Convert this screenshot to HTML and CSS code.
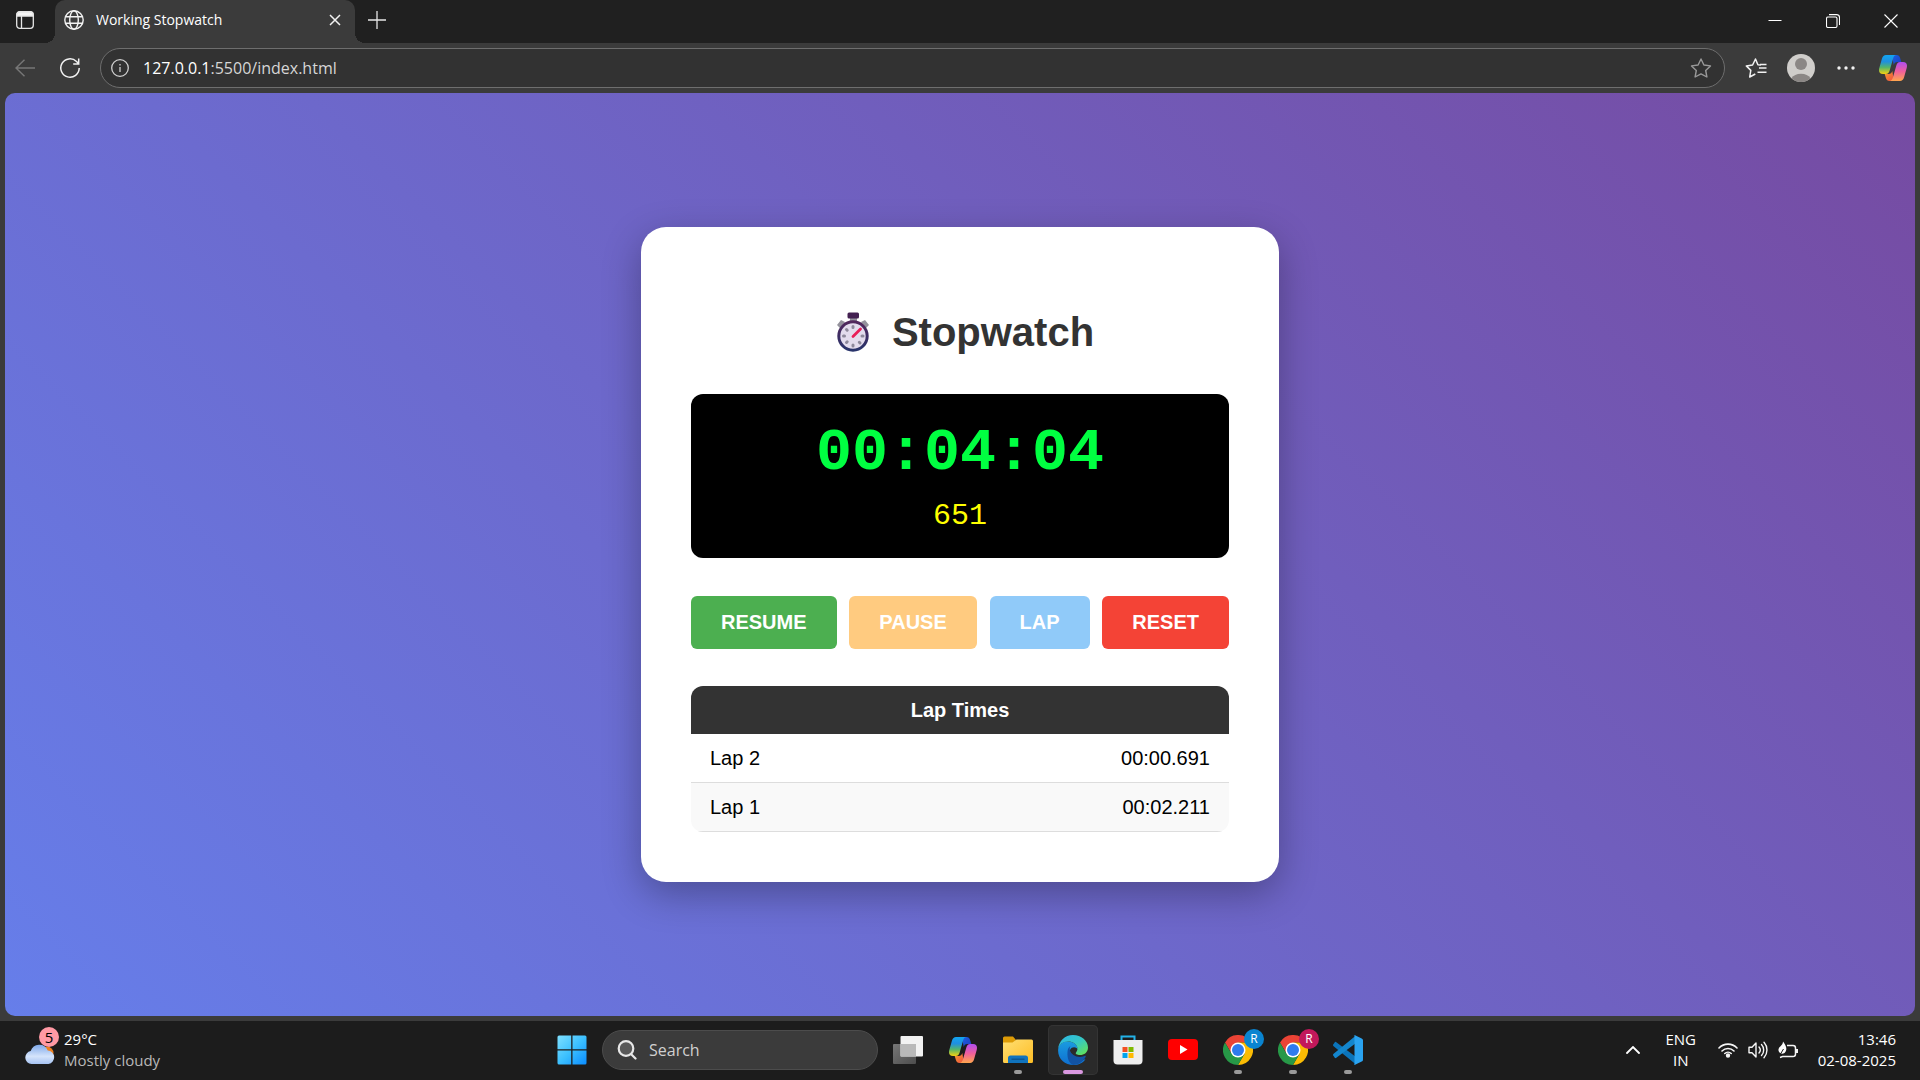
FILE: index.html
```html
<!DOCTYPE html>
<html lang="en">
<head>
<meta charset="utf-8">
<title>Working Stopwatch</title>
<link rel="stylesheet" href="styles.css">
</head>
<body>
<svg class="defs" aria-hidden="true">
  <defs>
    <linearGradient id="cpA" x1="0" y1="0" x2="0" y2="1"><stop offset="0" stop-color="#12a5f0"/><stop offset=".35" stop-color="#1f8fe0"/><stop offset=".65" stop-color="#53b56b"/><stop offset="1" stop-color="#f5d310"/></linearGradient>
    <linearGradient id="cpB" x1="0" y1="0" x2="0" y2="1"><stop offset="0" stop-color="#b04df0"/><stop offset=".5" stop-color="#f05f9c"/><stop offset="1" stop-color="#ffa64d"/></linearGradient>
    <linearGradient id="cpC" x1="0" y1="0" x2="1" y2="1"><stop offset="0" stop-color="#1d5fe0"/><stop offset="1" stop-color="#1b3fc0"/></linearGradient>
    <linearGradient id="cpD" x1="0" y1="0" x2="1" y2="1"><stop offset="0" stop-color="#f7a330"/><stop offset="1" stop-color="#ee4a3f"/></linearGradient>
    <linearGradient id="win" x1="0" y1="0" x2="1" y2="1"><stop offset="0" stop-color="#7fe0ff"/><stop offset=".5" stop-color="#3cc0ff"/><stop offset="1" stop-color="#0a8cff"/></linearGradient>
    <linearGradient id="fold" x1="0" y1="0" x2="1" y2="1"><stop offset="0" stop-color="#ffdf73"/><stop offset="1" stop-color="#fdbd25"/></linearGradient>
    <linearGradient id="edTop" x1="0" y1="0" x2="1" y2="1"><stop offset="0" stop-color="#2cb5e8"/><stop offset=".5" stop-color="#35c7c4"/><stop offset="1" stop-color="#69e64a"/></linearGradient>
    <linearGradient id="edLeft" x1="0" y1="0" x2="0" y2="1"><stop offset="0" stop-color="#1a9be0"/><stop offset="1" stop-color="#0f6fd0"/></linearGradient>
    <linearGradient id="cloud" x1="0" y1="0" x2="0" y2="1"><stop offset="0" stop-color="#7fa9ea"/><stop offset=".6" stop-color="#d5e4fb"/><stop offset="1" stop-color="#a6c3f2"/></linearGradient>
    <linearGradient id="tvBack" x1="0" y1="0" x2="1" y2="1"><stop offset="0" stop-color="#777"/><stop offset="1" stop-color="#4d4d4d"/></linearGradient>
    <linearGradient id="rim" x1="0" y1="0" x2="0" y2="1"><stop offset="0" stop-color="#51285c"/><stop offset="1" stop-color="#29346b"/></linearGradient>
    <symbol id="copilot" viewBox="0 0 28 26">
      <path fill="url(#cpC)" d="M13 0h4.500c2 0 3 1 3.600 3l1.200 4h-4c-2 0-3 1-3.600 3z"/>
      <path fill="url(#cpD)" d="M15 26h-4.500c-2 0-3-1-3.600-3L5.700 19h4c2 0 3-1 3.600-3z"/>
      <path fill="url(#cpA)" d="M7 0h10.500c-1.700 0-2.700 1.200-3.300 3.200L10.500 16c-.7 2-1.700 3-3.700 3H4c-3.500 0-4.600-2.500-3.700-6L3 3.500C3.700 1.200 5 0 7 0z"/>
      <path fill="url(#cpB)" d="M21 26H10.500c1.700 0 2.700-1.200 3.300-3.200L17.500 10c.7-2 1.700-3 3.700-3H24c3.500 0 4.600 2.500 3.700 6L25 22.500c-.7 2.300-2 3.500-4 3.500z"/>
    </symbol>
    <symbol id="chrome" viewBox="0 0 30 30">
      <path fill="#ea4335" d="M15 7.500h13A15 15 0 0 0 2 7.500l6.500 11z"/>
      <path fill="#fbbc04" d="M15 7.500h13A15 15 0 0 1 15 30l6.500-11.300z"/>
      <path fill="#279847" d="M2 7.500 8.500 18.700 21.500 18.700 15 30A15 15 0 0 1 2 7.500z"/>
      <circle cx="15" cy="15" r="7.500" fill="#fff"/><circle cx="15" cy="15" r="6" fill="#2f7bee"/>
    </symbol>
  </defs>
</svg>

<div class="desktop">
  <header class="tabbar">
    <button class="tab-actions" aria-label="Tab actions menu">
      <svg width="18" height="18" viewBox="0 0 18 18" fill="none" stroke="#e6e6e6" stroke-width="1.300"><rect x=".7" y=".7" width="16.600" height="16.600" rx="3"/><path d="M5.500 5v12"/><path d="M1 3.500a2.500 2.500 0 0 1 2.500-2.500h11A2.500 2.500 0 0 1 17 3.500V5H1z" fill="#f5f5f5"/></svg>
    </button>
    <div class="tab">
      <svg width="20" height="20" viewBox="0 0 20 20" fill="none" stroke="#f2f2f2" stroke-width="1.400"><circle cx="10" cy="10" r="9.200"/><ellipse cx="10" cy="10" rx="4.300" ry="9.200"/><path d="M1.500 6.700h17M1.500 13.300h17"/></svg>
      <span class="tab-title">Working Stopwatch</span>
      <button class="tab-close" aria-label="Close tab"><svg width="12" height="12" viewBox="0 0 12 12" stroke="#f2f2f2" stroke-width="1.500"><path d="M1 1l10 10M11 1 1 11"/></svg></button>
    </div>
    <button class="new-tab" aria-label="New tab"><svg width="18" height="18" viewBox="0 0 18 18" stroke="#e6e6e6" stroke-width="1.300"><path d="M9 0v18M0 9h18"/></svg></button>
    <div class="window-controls">
      <button aria-label="Minimize"><svg width="14" height="14" viewBox="0 0 14 14" stroke="#fff"><path d="M.5 6.500h13"/></svg></button>
      <button aria-label="Restore"><svg width="14" height="14" viewBox="0 0 14 14" fill="none" stroke="#fff" stroke-width="1.100"><rect x=".5" y="3" width="10.500" height="10.500" rx="1.500"/><path d="M3 .6h7.500a3 3 0 0 1 3 3V11"/></svg></button>
      <button aria-label="Close"><svg width="14" height="14" viewBox="0 0 14 14" stroke="#fff" stroke-width="1.100"><path d="M.5.5l13 13M13.500.5l-13 13"/></svg></button>
    </div>
  </header>

  <nav class="toolbar">
    <button aria-label="Back"><svg width="20" height="18" viewBox="0 0 20 18" fill="none" stroke="#777" stroke-width="1.400"><path d="M20 9H1M9.500.7 1 9l8.500 8.300"/></svg></button>
    <button aria-label="Refresh"><svg width="20" height="20" viewBox="0 0 20 20" fill="none" stroke="#f2f2f2" stroke-width="1.500"><path d="M19.200 10A9.200 9.200 0 1 1 16.500 3.500L18.500 5.500M18.700.5v5.500h-5.500"/></svg></button>
    <div class="address">
      <svg width="18" height="18" viewBox="0 0 18 18" fill="none" stroke="#d0d0d0" stroke-width="1.300"><circle cx="9" cy="9" r="8.300"/><path d="M9 8v5M9 5v1.500"/></svg>
      <div class="url"><span class="host">127.0.0.1</span>:5500/index.html</div>
      <button aria-label="Add to favorites"><svg width="22" height="20" viewBox="0 0 22 20" fill="none" stroke="#999" stroke-width="1.400" stroke-linejoin="round"><path d="M11 1l2.900 6 6.600.9-4.800 4.600 1.200 6.500L11 15.900 5.100 19l1.200-6.500L1.500 7.900l6.600-.9z"/></svg></button>
    </div>
    <div class="tools">
      <button aria-label="Favorites"><svg width="22" height="20" viewBox="0 0 22 20" fill="none" stroke="#f2f2f2" stroke-width="1.500" stroke-linejoin="round"><path d="M16 7l-3.100-.3L10.500 1 7.600 7l-6.300.9 4.500 4.500L4.700 19l5.600-3M14 10h7.500M12.500 14.300h9M15 6.500h6.500"/></svg></button>
      <button aria-label="Profile"><svg width="28" height="28" viewBox="0 0 28 28"><circle cx="14" cy="14" r="14" fill="#d0cecb"/><circle cx="14" cy="10" r="6" fill="#8b8785"/><path d="M4.500 24.300a10.500 8 0 0 1 19 0A14 14 0 0 1 4.500 24.300z" fill="#8b8785"/></svg></button>
      <button aria-label="Settings and more"><svg width="18" height="4" viewBox="0 0 18 4" fill="#f2f2f2"><circle cx="2" cy="2" r="1.700"/><circle cx="9" cy="2" r="1.700"/><circle cx="16" cy="2" r="1.700"/></svg></button>
      <button class="assistant" aria-label="Copilot"><svg width="28" height="26"><use href="#copilot"/></svg></button>
    </div>
  </nav>

  <main class="page">
    <section class="card">
      <h1>
        <svg width="54" height="54" viewBox="0 0 54 54">
          <path fill="#94929c" d="M24 11h7v6h-7zM11 20l4-5 4 2-5 6zM43 20l-4-5-4 2 5 6z"/>
          <rect x="21.500" y="7.500" width="11.500" height="6" rx="1.500" fill="#432051"/>
          <circle cx="27" cy="31" r="14.200" fill="#e3dced" stroke="url(#rim)" stroke-width="3"/>
          <g stroke="#8e899b" stroke-width="3" stroke-linecap="round"><path d="M27 21.500v1M27 40v1M17.500 31h1M36 31h1M20.500 24.500l.7.700M33.300 37.300l.7.700M20.500 37.500l.7-.7"/></g>
          <path d="M27 31.500l7.500-7.500" stroke="#e91e58" stroke-width="2.800" stroke-linecap="round"/>
        </svg>
        <span>Stopwatch</span>
      </h1>
      <div class="display">
        <div class="time">00:04:04</div>
        <div class="millis">651</div>
      </div>
      <div class="actions">
        <button class="btn resume">RESUME</button>
        <button class="btn pause" disabled>PAUSE</button>
        <button class="btn lap" disabled>LAP</button>
        <button class="btn reset">RESET</button>
      </div>
      <table class="laps">
        <thead><tr><th colspan="2">Lap Times</th></tr></thead>
        <tbody>
          <tr><td>Lap 2</td><td>00:00.691</td></tr>
          <tr><td>Lap 1</td><td>00:02.211</td></tr>
        </tbody>
      </table>
    </section>
  </main>

  <footer class="taskbar">
    <button class="weather">
      <span class="weather-icon">
        <svg width="30" height="28" viewBox="0 0 30 28"><circle cx="22" cy="17" r="6.500" fill="#f08020"/><path fill="url(#cloud)" d="M6.500 28a6.500 6.500 0 0 1-.8-12.900 9 9 0 0 1 17-.6A6.800 6.800 0 0 1 23.500 28z"/></svg>
        <span class="count">5</span>
      </span>
      <span class="weather-text"><span class="temp">29°C</span><span>Mostly cloudy</span></span>
    </button>
    <div class="apps">
      <button class="app" aria-label="Start"><svg width="30" height="30" viewBox="0 0 30 30"><path fill="url(#win)" d="M2 .5h12.200v13.700H.5V2A1.500 1.500 0 0 1 2 .5zM15.500.5H28A1.500 1.500 0 0 1 29.500 2v12.200h-14zM.5 15.500h13.700v14H2A1.500 1.500 0 0 1 .5 28zM15.500 15.500h14V28a1.500 1.500 0 0 1-1.500 1.500H15.500z"/></svg></button>
      <label class="search">
        <svg width="20" height="20" viewBox="0 0 20 20" fill="none" stroke="#e8e8e8" stroke-width="2.200"><circle cx="9" cy="8.500" r="7.300" fill="#595959"/><path d="M14 14l4.500 4.500" stroke-linecap="round"/></svg>
        <input type="text" placeholder="Search" aria-label="Search">
      </label>
      <button class="app" aria-label="Task view"><svg width="30" height="28" viewBox="0 0 30 28"><rect y="8" width="23" height="20" rx="1" fill="url(#tvBack)"/><rect x="7.500" width="22.500" height="20.500" rx="1" fill="#f2f2f2"/><path fill="#b9b9b9" d="M7.500 8H23v12.500H7.500z"/></svg></button>
      <button class="app" aria-label="Copilot"><svg width="28" height="26"><use href="#copilot"/></svg></button>
      <button class="app running" aria-label="File Explorer"><svg width="30" height="28" viewBox="0 0 30 28"><path fill="#dd9b06" d="M0 2a1.500 1.500 0 0 1 1.500-1.500H10L13 4l-3 5H0z"/><path fill="url(#fold)" d="M0 6.500h9.500l4-3h15A1.500 1.500 0 0 1 30 5v20.500a1.500 1.500 0 0 1-1.500 1.500h-27A1.500 1.500 0 0 1 0 25.500z"/><path fill="#1073bd" d="M5 27v-5a2.500 2.500 0 0 1 2.500-2.500h15A2.500 2.500 0 0 1 25 22v5z"/><path d="M8.500 23.200h13" stroke="#0a4f87" stroke-width="1.200"/></svg></button>
      <button class="app running active" aria-label="Microsoft Edge"><svg width="30" height="30" viewBox="0 0 30 30">
        <path fill="url(#edLeft)" d="M.2 14C1 9 5 6.500 10 6.500c6 0 10 4 10 8.500-1-3-6-4-8 0-2.500 5 1 10 7 11 3 .5 6-.5 8.500-2C25 28 20.500 30 15.500 30 6.500 30-.8 23 .2 14z"/>
        <path fill="#1253a4" d="M9.500 17c0-3 1.300-5 3-6-.8 1.200-1 2.700-.5 4.500 1 3.500 5 6.500 10 6.500 2.500 0 4-1 5-1.200.8-.1 1 .7.600 1.300C25 27 20 30 15.500 30 11.500 29 9 24 9.500 17z"/>
        <path fill="url(#edTop)" d="M.2 14C.8 6 7 0 15 0c8.500 0 15 6 15 12.500 0 5-4 7.500-8 7.500-3 0-5-1-4-2.500 1.500-2 2-4 1-6C17.500 8 14 6.500 10 6.500 5 6.500 1 9.500.2 14z"/></svg></button>
      <button class="app" aria-label="Microsoft Store"><svg width="30" height="30" viewBox="0 0 30 30"><path d="M8.500 6V1.500h13V6" fill="none" stroke="#22b2e8" stroke-width="2"/><path fill="#eee" d="M.5 5h29v20.500a4 4 0 0 1-4 4h-21a4 4 0 0 1-4-4z"/><path fill="#f25022" d="M9.500 12h5v5h-5z"/><path fill="#7fba00" d="M15.500 12h5v5h-5z"/><path fill="#00a4ef" d="M9.500 18h5v5h-5z"/><path fill="#ffb900" d="M15.500 18h5v5h-5z"/></svg></button>
      <button class="app" aria-label="YouTube"><svg width="30" height="21" viewBox="0 0 30 21"><rect width="30" height="21" rx="4" fill="#f00"/><path fill="#fff" d="M12 6v9l7.500-4.500z"/></svg></button>
      <button class="app running" aria-label="Chrome, first profile"><svg width="30" height="30"><use href="#chrome"/></svg><span class="profile blue">R</span></button>
      <button class="app running" aria-label="Chrome, second profile"><svg width="30" height="30"><use href="#chrome"/></svg><span class="profile pink">R</span></button>
      <button class="app running" aria-label="Visual Studio Code"><svg width="30" height="30" viewBox="0 0 30 30"><path fill="#0b74ba" d="M3 7 23 22v7.500L.6 11.200c-.8-.7-.8-1.500-.2-2l1.200-1.700c.4-.6.900-.8 1.400-.5z"/><path fill="#1486cd" d="M3 23 23 8V.5L.6 18.800c-.8.700-.8 1.500-.2 2l1.200 1.700c.4.600.9.800 1.400.5z"/><path fill="#2aa3f0" d="M22 .3 28.700 3.500A2 2 0 0 1 30 5.400v19.200a2 2 0 0 1-1.300 1.900L22 29.700c-.6.300-1 0-1.500-.5.700.5 1 .1 1-.7v-27c0-.8-.3-1.200-1-.7C21 .3 21.400 0 22 .3z"/></svg></button>
    </div>
    <div class="tray">
      <button class="chevron" aria-label="Show hidden icons"><svg width="14" height="8" viewBox="0 0 14 8" fill="none" stroke="#fff" stroke-width="1.800" stroke-linecap="round"><path d="M1 7l6-6 6 6"/></svg></button>
      <button class="lang">ENG<br>IN</button>
      <button class="status" aria-label="Network, volume and battery">
        <svg width="20" height="16" viewBox="0 0 20 16" fill="none" stroke="#f5f5f5" stroke-width="1.600" stroke-linecap="round"><path d="M1 6a12.500 12.500 0 0 1 18 0M4 9a8.500 8.500 0 0 1 12 0M6.800 11.500a4.600 4.600 0 0 1 6.400 0"/><circle cx="10" cy="13.500" r="1.400" fill="#fff"/></svg>
        <svg width="20" height="18" viewBox="0 0 20 18" fill="none" stroke="#f5f5f5" stroke-width="1.400" stroke-linecap="round" stroke-linejoin="round"><path d="M1 6.300h3L8 2v14l-4-4.300H1zM11 6a4.500 4.500 0 0 1 0 6M13.500 3.500a8 8 0 0 1 0 11M16 1.300a11.500 11.500 0 0 1 0 15.400"/></svg>
        <svg width="20" height="18" viewBox="0 0 20 18" fill="none" stroke="#f5f5f5" stroke-width="1.500"><path d="M9 4.500h6a2.500 2.500 0 0 1 2.500 2.500v6a2.500 2.500 0 0 1-2.500 2.500H4.500L2 16.500"/><path d="M19 8v4" stroke-width="2"/><path d="M5 .5c3 4 5 8 1.500 11.500C4 13.500 1 12.500.5 9.500 0 5.500 5 5 5 .5z" fill="#fff" stroke="none"/><path d="M1 15.500 5.500 8" stroke="#1c1c1c" stroke-width="1"/></svg>
      </button>
      <button class="clock">13:46<br>02-08-2025</button>
    </div>
  </footer>
</div>
</body>
</html>
```
FILE: styles.css
```css
* { box-sizing: border-box; }

body {
  margin: 0;
  background: #3b3b3b;
  font-family: "Open Sans", "Noto Sans", sans-serif;
}

button {
  display: flex;
  align-items: center;
  justify-content: center;
  padding: 0;
  border: 0;
  background: none;
  color: inherit;
  font: inherit;
}

svg { display: block; flex: none; }

.defs { position: absolute; width: 0; height: 0; }

.desktop {
  display: flex;
  flex-direction: column;
  min-height: 100vh;
}

/* Tab strip */
.tabbar {
  display: flex;
  height: 43px;
  background: #202020;
  color: #fff;
}

.tab-actions { width: 50px; height: 40px; margin-right: 5px; }

.tab {
  position: relative;
  display: flex;
  align-items: center;
  gap: 12px;
  width: 300px;
  padding: 0 14px 3px 9px;
  border-radius: 10px 10px 0 0;
  background: #3b3b3b;
}

.tab::before,
.tab::after {
  content: "";
  position: absolute;
  bottom: 0;
  width: 10px;
  height: 10px;
}

.tab::before {
  right: 100%;
  background: radial-gradient(circle at 0 0, #202020 10px, #3b3b3b 10px);
}

.tab::after {
  left: 100%;
  background: radial-gradient(circle at 100% 0, #202020 10px, #3b3b3b 10px);
}

.tab-title { flex: 1; font-size: 14px; line-height: 20px; }

.new-tab { width: 44px; height: 40px; }

.window-controls { display: flex; margin-left: auto; }
.window-controls button { width: 58px; height: 42px; }

/* Address bar */
.toolbar {
  display: flex;
  align-items: center;
  height: 50px;
  padding-right: 2px;
}

.toolbar > button { width: 50px; height: 40px; }
.toolbar > button + button { width: 40px; }

.address {
  display: flex;
  flex: 1;
  align-items: center;
  height: 40px;
  margin-left: 10px;
  padding: 0 12px 0 10px;
  border: 1px solid #6e6e6e;
  border-radius: 20px;
  background: #323232;
}

.url { flex: 1; margin-left: 14px; color: #d6d6d6; font-size: 16px; line-height: 24px; }
.host { color: #fff; }

.tools { display: flex; margin-left: 8px; }
.tools button { width: 45px; height: 40px; }
.tools .assistant { width: 50px; }

/* Stopwatch page */
.page {
  display: flex;
  flex: 1;
  align-items: center;
  justify-content: center;
  margin: 0 5px 5px;
  border-radius: 10px;
  background: linear-gradient(45deg, #667eea, #764ba2);
  font-family: "Liberation Sans", Arial, sans-serif;
}

.card {
  width: 100%;
  max-width: 638px;
  padding: 50px;
  border-radius: 25px;
  background: #fff;
  box-shadow: 0 12px 38px rgba(0, 0, 0, 0.3);
}

h1 {
  display: flex;
  align-items: center;
  justify-content: center;
  gap: 12px;
  margin: 28px 0 35px;
  color: #333;
  font-size: 40px;
  line-height: 54px;
}

.display {
  padding: 25px;
  border-radius: 12px;
  background: #000;
  font-family: "Liberation Mono", "Courier New", monospace;
  text-align: center;
}

.time { color: #00ff41; font-size: 60px; font-weight: bold; line-height: 68px; }
.millis { margin-top: 12px; color: #ffff00; font-size: 30px; line-height: 34px; }

.actions {
  display: flex;
  justify-content: space-between;
  margin: 38px 0 37px;
}

.btn {
  padding: 15px 30px;
  border-radius: 6px;
  color: #fff;
  font-size: 20px;
  font-weight: bold;
  line-height: 23px;
}

.resume { background: #4caf50; }
.pause { background: #ffcb80; }
.lap { background: #90caf9; }
.reset { background: #f44336; }

.laps {
  width: 100%;
  overflow: hidden;
  border-spacing: 0;
  border-radius: 12px;
  font-size: 20px;
  line-height: 24px;
}

.laps th { padding: 12px; background: #333; color: #fff; }
.laps td { padding: 12px 19px; border-bottom: 1px solid #ddd; }
.laps td:last-child { text-align: right; }
.laps tr:nth-child(even) td { background: #f9f9f9; }

/* Taskbar */
.taskbar {
  display: grid;
  grid-template-columns: 1fr auto 1fr;
  align-items: center;
  height: 59px;
  padding-bottom: 2px;
  background: #1c1c1c;
  color: #fff;
  font-size: 15px;
  line-height: 21px;
}

.weather { justify-self: start; gap: 9px; margin-left: 25px; text-align: left; }
.weather-icon { position: relative; }
.weather-text { display: flex; flex-direction: column; color: #b8b8b8; }
.temp { color: #fff; }

.count {
  position: absolute;
  top: -9px;
  right: -4px;
  width: 20px;
  height: 20px;
  border-radius: 50%;
  background: #ff99a4;
  color: #000;
  line-height: 20px;
  text-align: center;
}

.apps { display: flex; align-items: center; gap: 5px; }

.app {
  position: relative;
  width: 50px;
  height: 50px;
  border-radius: 5px;
}

.active { background: #2a2a2a; box-shadow: inset 0 0 0 1px #343434; }

.running::after {
  content: "";
  position: absolute;
  bottom: 1px;
  left: 21px;
  width: 8px;
  height: 4px;
  border-radius: 2px;
  background: #9a9a9a;
}

.active::after { left: 15px; width: 20px; background: #d998e0; }

.profile {
  position: absolute;
  top: 4px;
  right: -1px;
  width: 20px;
  height: 20px;
  border-radius: 50%;
  font-size: 12px;
  line-height: 20px;
}

.blue { background: #0a84d0; }
.pink { background: #c2185b; }

.search {
  display: flex;
  align-items: center;
  gap: 12px;
  width: 276px;
  height: 40px;
  padding: 0 14px;
  border: 1px solid #4c4c4c;
  border-radius: 20px;
  background: #3b3b3b;
}

.search input {
  flex: 1;
  min-width: 0;
  padding: 0;
  border: 0;
  outline: 0;
  background: none;
  color: #fff;
  font: 16px/24px "Open Sans", "Noto Sans", sans-serif;
}

.search input::placeholder { color: #d0d0d0; opacity: 1; }

.tray {
  display: flex;
  align-items: center;
  justify-self: end;
  margin-right: 24px;
}

.chevron { width: 30px; height: 40px; }
.lang { width: 66px; }
.status { gap: 10px; margin-right: 20px; margin-left: 4px; }
.clock { text-align: right; }
```
